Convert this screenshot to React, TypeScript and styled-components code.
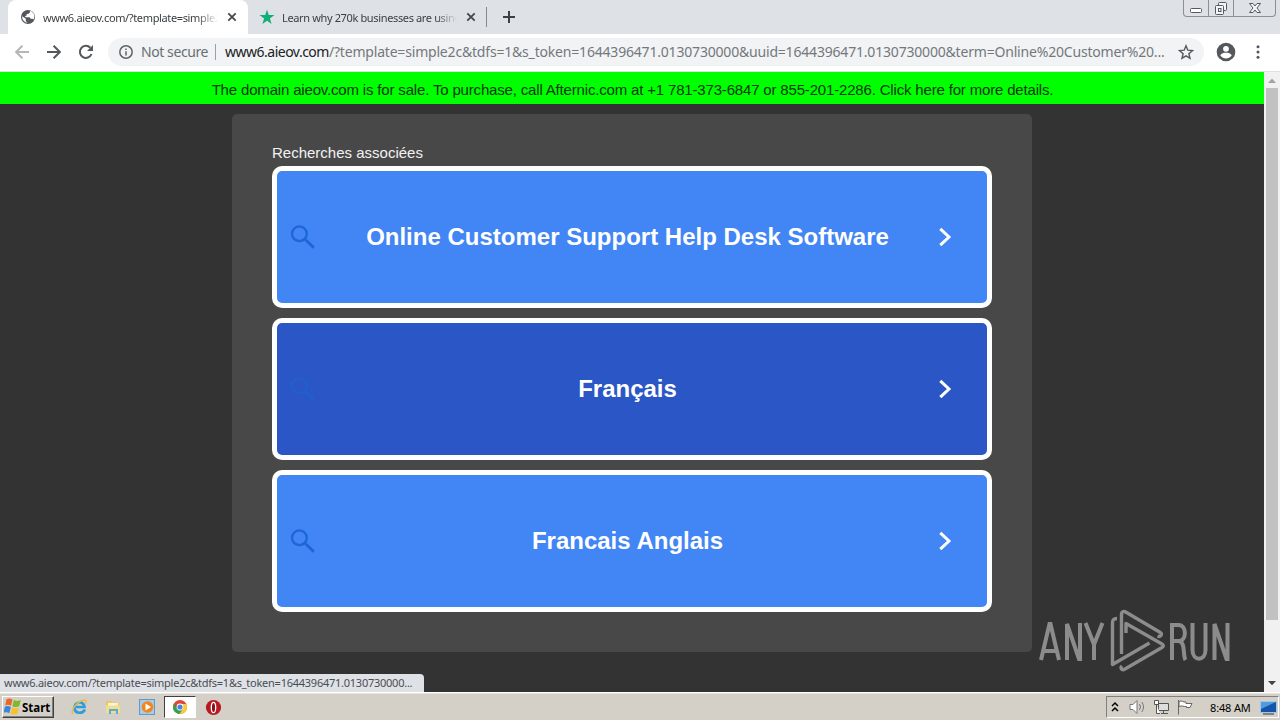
import React from "react";
import styled, { createGlobalStyle } from "styled-components";

const uiFont = `"Noto Sans", "Open Sans", "DejaVu Sans", sans-serif`;
const pageFont = `"Liberation Sans", Arial, sans-serif`;

const GlobalStyle = createGlobalStyle`
  * { box-sizing: border-box; }
  body { margin: 0; background: #333; overflow: hidden; }
  svg { display: block; flex: none; }
`;

const Desktop = styled.div`
  width: 1280px;
  height: 720px;
  display: flex;
  flex-direction: column;
  overflow: hidden;
  font-family: ${uiFont};
`;

const Label = styled.span<{ $size: number; $spacing?: number; $color?: string; $width?: number; $weight?: number }>`
  font-size: ${(p) => p.$size}px;
  letter-spacing: ${(p) => p.$spacing ?? 0}px;
  color: ${(p) => p.$color ?? "#3c4043"};
  font-weight: ${(p) => p.$weight ?? 400};
  width: ${(p) => (p.$width ? `${p.$width}px` : "auto")};
  flex: none;
  white-space: nowrap;
`;

const TabStrip = styled.header`
  height: 34px;
  flex: none;
  display: flex;
  background: #dee1e6;
  padding-left: 8px;
`;

const Tab = styled.div<{ $active?: boolean }>`
  width: 240px;
  height: 34px;
  display: flex;
  align-items: center;
  padding-left: ${(p) => (p.$active ? 12 : 11)}px;
  border-radius: 8px 8px 0 0;
  background: ${(p) => (p.$active ? "#fff" : "transparent")};
`;

const TabTitle = styled(Label)`
  margin-left: 7px;
  margin-right: 9px;
  overflow: hidden;
  mask-image: linear-gradient(to right, #000 88%, transparent);
`;

const TabDivider = styled.div`
  width: 1px;
  height: 20px;
  margin: 7px 15px 0 -2px;
  background: #85888d;
`;

const NewTab = styled.div`
  padding-top: 10px;
`;

const WindowControls = styled.div`
  height: 17px;
  margin-left: auto;
  margin-right: 4px;
  display: flex;
  border: 1px solid #8b8f96;
  border-top: 0;
  border-radius: 0 0 4px 4px;
`;

const WindowButton = styled.div<{ $width: number }>`
  width: ${(p) => p.$width}px;
  display: flex;
  justify-content: center;
  & + & { border-left: 1px solid #8b8f96; }
`;

const Toolbar = styled.div`
  height: 38px;
  flex: none;
  display: flex;
  align-items: center;
  padding: 0 12px 2px 14px;
  background: #fff;
  border-bottom: 1px solid #dce2dc;
`;

const NavIcons = styled.div`
  display: flex;
  gap: 16px;
  margin-right: 14px;
`;

const AddressBar = styled.div`
  width: 1096px;
  flex: none;
  height: 28px;
  display: flex;
  align-items: center;
  padding-left: 10px;
  border-radius: 14px;
  background: #f1f3f4;
`;

const SecurityLabel = styled(Label)`
  margin-left: 7px;
`;

const AddressDivider = styled.div`
  width: 1px;
  height: 16px;
  margin: 0 9px 0 7px;
  background: #9aa0a6;
`;

const Url = styled.div`
  width: 953px;
  display: flex;
  flex: none;
  line-height: 20px;
`;

const ToolbarEnd = styled.div`
  display: flex;
  align-items: center;
  gap: 12px;
  margin-left: 12px;
`;

const Viewport = styled.main`
  height: 620px;
  flex: none;
  display: flex;
  background: #333;
  position: relative;
`;

const Page = styled.div`
  width: 1264px;
  font-family: ${pageFont};
`;

const Banner = styled.div`
  height: 32px;
  display: flex;
  justify-content: center;
  align-items: center;
  padding: 2px 0 0 1px;
  background: #0f0;
`;

const Card = styled.section`
  width: 800px;
  height: 538px;
  margin: 10px auto 0;
  padding: 29px 40px 0;
  border-radius: 5px;
  background: #484848;
`;

const Heading = styled.div`
  height: 23px;
  line-height: 20px;
  display: flex;
`;

const Results = styled.div`
  display: flex;
  flex-direction: column;
  gap: 10px;
`;

const Result = styled.a<{ $hovered?: boolean }>`
  height: 142px;
  display: grid;
  grid-template-columns: 40px 1fr 49px;
  align-items: center;
  border: 5px solid #fff;
  border-radius: 10px;
  background: ${(p) => (p.$hovered ? "#2a56c6" : "#4285f4")};
  color: ${(p) => (p.$hovered ? "#225fcd" : "#1d66d6")};
`;

const ResultIcon = styled.span`
  padding-left: 13px;
`;

const ResultText = styled.span`
  text-align: center;
  font-size: 24px;
  line-height: 28px;
  font-weight: 700;
  color: #fff;
`;

const Scrollbar = styled.div`
  width: 16px;
  display: flex;
  flex-direction: column;
  align-items: center;
  background: #f1f1f1;
`;

const ScrollThumb = styled.div`
  width: 12px;
  height: 532px;
  margin-bottom: auto;
  background: #c1c1c1;
`;

const StatusBubble = styled.div`
  position: absolute;
  left: 0;
  bottom: 0;
  width: 424px;
  height: 18px;
  padding-left: 4px;
  line-height: 17px;
  display: flex;
  border-radius: 0 4px 0 0;
  background: #dee1e6;
`;

const Watermark = styled.div`
  position: absolute;
  left: 1036px;
  top: 536px;
  display: flex;
  opacity: 0.62;
`;

const Taskbar = styled.footer`
  height: 28px;
  flex: none;
  display: flex;
  align-items: center;
  padding: 1px 0 0 2px;
  background: #d4d0c8;
  border-top: 1px solid #fff;
  box-shadow: inset 0 1px #e8e5df;
`;

const StartButton = styled.button`
  width: 52px;
  height: 22px;
  display: flex;
  align-items: center;
  padding: 0 0 0 1px;
  border: 1px solid;
  border-color: #fff #404040 #404040 #fff;
  box-shadow: inset -1px -1px #808080;
  background: #d4d0c8;
  font-family: inherit;
`;

const Launchers = styled.div`
  display: flex;
  align-items: center;
  margin-left: 8px;
`;

const Launcher = styled.div<{ $active?: boolean }>`
  width: ${(p) => (p.$active ? 32 : 34)}px;
  height: 22px;
  display: flex;
  justify-content: center;
  align-items: center;
  border: ${(p) => (p.$active ? "1px solid" : "0")};
  border-color: #404040 #fff #fff #404040;
  background: ${(p) => (p.$active ? "#fff" : "transparent")};
`;

const Tray = styled.div`
  width: 173px;
  height: 22px;
  margin-left: auto;
  margin-right: 1px;
  display: flex;
  align-items: center;
  padding-left: 4px;
  border: 1px solid;
  border-color: #808080 #fff #fff #808080;
`;

const TrayIcon = styled.div<{ $gap: number }>`
  margin-right: ${(p) => p.$gap}px;
`;

const CloseIcon = () => (
  <svg width="10" height="10" viewBox="0 0 10 10" stroke="#45484b" strokeWidth="1.8">
    <path d="M1.3 1.3l7.4 7.4M8.7 1.3L1.3 8.7" />
  </svg>
);

const GlobeIcon = () => (
  <svg width="16" height="16" viewBox="0 0 16 16">
    <circle cx="8" cy="8" r="7" fill="#54585d" />
    <path d="M2.2 7.2l3.6 2.6v2.4l1.8 1.4c-2.9 0-5.8-2.7-5.4-6.4zM10 1.8v1.4L8.5 4.8 6.6 5v1.6L5 7.2l.6 1h4l1 1.6h1.8l1.2.8c2-4 .2-7.4-3.6-8.8z" fill="#fff" />
  </svg>
);

const StarTabIcon = () => (
  <svg width="16" height="16" viewBox="0 0 16 16">
    <path d="M8 .8l1.8 5.3h5.7l-4.6 3.4 1.7 5.5L8 11.7 3.4 15l1.7-5.5L.5 6.1h5.7z" fill="#12ae78" />
  </svg>
);

const BackIcon = () => (
  <svg width="16" height="16" viewBox="0 0 16 16" fill="none" stroke="#b4b6b8" strokeWidth="2">
    <path d="M15 8H2.5M8.4 1.7L2.1 8l6.3 6.3" />
  </svg>
);

const ForwardIcon = () => (
  <svg width="16" height="16" viewBox="0 0 16 16" fill="none" stroke="#55585c" strokeWidth="2">
    <path d="M1 8h12.5M7.6 1.7L13.9 8l-6.3 6.3" />
  </svg>
);

const ReloadIcon = () => (
  <svg width="16" height="16" viewBox="0 0 16 16">
    <path d="M13.5 10A6 6 0 1 1 12.3 3.8" fill="none" stroke="#55585c" strokeWidth="2" />
    <path d="M15 1v6H9z" fill="#55585c" />
  </svg>
);

const InfoIcon = () => (
  <svg width="16" height="16" viewBox="0 0 16 16" fill="none" stroke="#5f6368" strokeWidth="1.5">
    <circle cx="8" cy="8" r="6.2" />
    <path d="M8 7.2v4.2M8 4.4v1.7" />
  </svg>
);

const BookmarkIcon = () => (
  <svg width="16" height="16" viewBox="0 0 16 16" fill="none" stroke="#55585c" strokeWidth="1.4">
    <path d="M8 1.8l1.8 4.4 4.7.4-3.6 3.1 1.1 4.6L8 11.8l-4 2.5 1.1-4.6-3.6-3.1 4.7-.4z" />
  </svg>
);

const ProfileIcon = () => (
  <svg width="20" height="20" viewBox="0 0 20 20">
    <circle cx="10" cy="10" r="9.3" fill="#54585d" />
    <circle cx="10" cy="6.8" r="2.9" fill="#fff" />
    <path d="M4.3 13.5c1-2.2 3.5-2.7 5.7-2.7s4.7.5 5.7 2.7c-1.4 2-3.5 3-5.7 3s-4.3-1-5.7-3z" fill="#fff" />
  </svg>
);

const MenuIcon = () => (
  <svg width="20" height="20" viewBox="0 0 20 20" fill="#54585d">
    <circle cx="10" cy="4.8" r="1.5" />
    <circle cx="10" cy="10" r="1.5" />
    <circle cx="10" cy="15.2" r="1.5" />
  </svg>
);

const SearchIcon = () => (
  <svg width="25" height="26" viewBox="0 0 25 26" fill="none" stroke="currentColor">
    <circle cx="9.4" cy="9.7" r="7.4" strokeWidth="2.3" />
    <path d="M14.8 15l9 8.700" strokeWidth="2.900" />
  </svg>
);

const ChevronIcon = () => (
  <svg width="14" height="20" viewBox="0 0 14 20" fill="none" stroke="#fff" strokeWidth="3">
    <path d="M2.300 1.800l8.700 8.200-8.700 8.200" />
  </svg>
);

const ScrollArrow = ({ down }: { down?: boolean }) => (
  <svg width="16" height="16" viewBox="0 0 16 16">
    {down ? <path d="M4 5h8l-4 4.200z" fill="#444" /> : <path d="M4 11h8L8 6.500z" fill="#a3a3a3" />}
  </svg>
);

const BrandMark = () => (
  <svg width="198" height="68" viewBox="0 0 198 68" fill="none" stroke="#c3c3c3">
    <g strokeWidth="4">
      <path d="M5 52L13.500 16h1L23 52M8 43h12" />
      <path d="M31 52V16l12 35h1V15" />
      <path d="M49.500 15L58 36.500V52M66.500 15L58 36.500" />
      <path d="M136 52V17h6.500c8.500 0 8.500 16 0 16H136M142 33c8 0 4.500 14 7.500 19" />
      <path d="M156.500 15v27c0 11.500 13 11.500 13 0V15" />
      <path d="M178.500 52V16l12 35h1V15" />
    </g>
    <g strokeWidth="3.400" strokeLinejoin="round">
      <path d="M81 10.500c-3.500 0-4.500 1-4.500 4.500v41.500L113.500 35" />
      <path d="M85.500 46V7c0-4 2.500-4 5-2.500L123.500 24c3.500 2 1.500 5.500-2 4" />
      <path d="M90 25v-9.500L126 36c1.800 1 1.800 2.500 0 3.500L89 61c-3.500 2-5-1-3-3" />
    </g>
  </svg>
);

const WindowsIcon = () => (
  <svg width="18" height="18" viewBox="1 1 14.500 14.500">
    <path d="M3 2c2-1 3.300-.7 4.800.2L6.700 7.300C5.200 6.400 3.600 6.200 2 7z" fill="#ef6525" />
    <path d="M8.900 2.600c2 1 3.700 1 5.600.1l-1.300 5c-1.800.9-3.600.8-5.400-.1z" fill="#80b829" />
    <path d="M1.700 8c1.700-.8 3.200-.6 4.800.3l-1.200 5c-1.500-.9-3-1-4.800-.2z" fill="#3d86d6" />
    <path d="M7.600 8.700c1.800.9 3.500 1 5.300.2l-1.200 4.800c-1.900.9-3.700.8-5.400-.1z" fill="#f7c02c" />
  </svg>
);

const ExplorerIcon = () => (
  <svg width="18" height="18" viewBox="0 0 18 18" fill="none">
    <path d="M14.800 11.500c-1.300 4-9.600 5.100-10.400-1.500C4 3.500 14 2.200 14.500 9H6" stroke="#329bdc" strokeWidth="2.700" />
    <path d="M3 16C-.5 13.500 7 3 14 2c3-.5 2.500 2 1.500 3.500" stroke="#e4bd48" strokeWidth="1.400" />
  </svg>
);

const FolderIcon = () => (
  <svg width="18" height="18" viewBox="0 0 18 18">
    <path d="M2 3h5l1 1.500h7V15H2z" fill="#e7c768" />
    <path d="M4 5h10v4H4z" fill="#fff6cb" />
    <path d="M2 7.500h14V15H2z" fill="#f2dc8d" />
    <path d="M5 16v-5h9v5h-2v-3H7v3z" fill="#5cadd6" />
  </svg>
);

const MediaIcon = () => (
  <svg width="18" height="18" viewBox="0 0 18 18">
    <rect x="1.500" y="1.500" width="15" height="15" fill="#a8cbea" stroke="#5a9bd3" />
    <circle cx="9.500" cy="9" r="5.800" fill="#f08718" />
    <path d="M7.500 5.500L13 9l-5.500 3.500z" fill="#fff" />
  </svg>
);

const ChromeIcon = () => (
  <svg width="16" height="16" viewBox="0 0 16 16">
    <circle cx="8" cy="8" r="7" fill="#e14536" />
    <path d="M2 4.500A7 7 0 0 0 7.500 15L11 9.700 8 8H4z" fill="#31a350" />
    <path d="M7.500 15A7 7 0 0 0 14.300 5H8l3 4.700z" fill="#f8cd35" />
    <circle cx="8" cy="8" r="3.400" fill="#fff" />
    <circle cx="8" cy="8" r="2.600" fill="#4484e8" />
  </svg>
);

const OperaIcon = () => (
  <svg width="17" height="17" viewBox="0 0 17 17">
    <circle cx="8.500" cy="8.500" r="7.600" fill="#b81820" />
    <ellipse cx="8.500" cy="8.500" rx="2.200" ry="5.200" fill="#8c1118" stroke="#fff" strokeWidth="1.300" />
  </svg>
);

const results = [
  { text: "Online Customer Support Help Desk Software", hovered: false },
  { text: "Français", hovered: true },
  { text: "Francais Anglais", hovered: false },
];

export default function App() {
  return (
    <>
      <GlobalStyle />
      <Desktop>
        <TabStrip>
          <Tab $active>
            <GlobeIcon />
            <TabTitle $size={11} $width={175} $spacing={-0.36}>www6.aieov.com/?template=simple2c</TabTitle>
            <CloseIcon />
          </Tab>
          <Tab>
            <StarTabIcon />
            <TabTitle $size={11} $width={175} $spacing={-0.36}>Learn why 270k businesses are using</TabTitle>
            <CloseIcon />
          </Tab>
          <TabDivider />
          <NewTab>
            <svg width="14" height="14" viewBox="0 0 14 14" stroke="#3c4043" strokeWidth="2"><path d="M1 7h12M7 1v12" /></svg>
          </NewTab>
          <WindowControls>
            <WindowButton $width={24}>
              <svg width="14" height="16" viewBox="0 0 14 16" fill="#fff" stroke="#555a62"><rect x="1.500" y="8.500" width="11" height="4" rx="1" /></svg>
            </WindowButton>
            <WindowButton $width={25}>
              <svg width="14" height="16" viewBox="0 0 14 16" fill="#f4f5f7" stroke="#555a62"><rect x="4.500" y="2.500" width="8" height="8" rx="1" /><rect x="1.500" y="5.500" width="8" height="9" rx="1" /><rect x="4.500" y="8.500" width="2.500" height="3" /></svg>
            </WindowButton>
            <WindowButton $width={42}>
              <svg width="14" height="16" viewBox="0 0 14 16" fill="#f4f5f7" stroke="#555a62"><path d="M1.500 3.500H5l2 2.500 2-2.500h3.500L9 8l3.500 4.500H9L7 10l-2 2.500H1.500L5 8z" /></svg>
            </WindowButton>
          </WindowControls>
        </TabStrip>
        <Toolbar>
          <NavIcons><BackIcon /><ForwardIcon /><ReloadIcon /></NavIcons>
          <AddressBar>
            <InfoIcon />
            <SecurityLabel $size={14} $width={67} $spacing={-0.42} $color="#6a6e73">Not secure</SecurityLabel>
            <AddressDivider />
            <Url>
              <Label $size={14} $spacing={-0.5} $color="#202124">www6.aieov.com</Label>
              <Label $size={14} $spacing={-0.19} $color="#74787d">/?template=simple2c&amp;tdfs=1&amp;s_token=1644396471.0130730000&amp;uuid=1644396471.0130730000&amp;term=Online%20Customer%20...</Label>
            </Url>
            <BookmarkIcon />
          </AddressBar>
          <ToolbarEnd><ProfileIcon /><MenuIcon /></ToolbarEnd>
        </Toolbar>
        <Viewport>
          <Page>
            <Banner>
              <Label $size={15} $spacing={-0.17} $color="#0b350b">The domain aieov.com is for sale. To purchase, call Afternic.com at +1 781-373-6847 or 855-201-2286. Click here for more details.</Label>
            </Banner>
            <Card>
              <Heading><Label $size={15} $color="#f2f2f2">Recherches associées</Label></Heading>
              <Results>
                {results.map(({ text, hovered }) => (
                  <Result key={text} $hovered={hovered}>
                    <ResultIcon><SearchIcon /></ResultIcon>
                    <ResultText>{text}</ResultText>
                    <ChevronIcon />
                  </Result>
                ))}
              </Results>
            </Card>
          </Page>
          <Scrollbar><ScrollArrow /><ScrollThumb /><ScrollArrow down /></Scrollbar>
          <StatusBubble>
            <Label $size={11} $spacing={-0.25} $color="#4a4d51">www6.aieov.com/?template=simple2c&amp;tdfs=1&amp;s_token=1644396471.0130730000...</Label>
          </StatusBubble>
          <Watermark><BrandMark /></Watermark>
        </Viewport>
        <Taskbar>
          <StartButton><WindowsIcon /><Label $size={11.5} $weight={700} $color="#000">Start</Label></StartButton>
          <Launchers>
            <Launcher><ExplorerIcon /></Launcher>
            <Launcher><FolderIcon /></Launcher>
            <Launcher><MediaIcon /></Launcher>
            <Launcher $active><ChromeIcon /></Launcher>
            <Launcher><OperaIcon /></Launcher>
          </Launchers>
          <Tray>
            <TrayIcon $gap={10}>
              <svg width="8" height="12" viewBox="0 0 8 12" fill="none" stroke="#000" strokeWidth="1.500"><path d="M1 5l3-3 3 3M1 10l3-3 3 3" /></svg>
            </TrayIcon>
            <TrayIcon $gap={7}>
              <svg width="17" height="16" viewBox="0 0 17 16" fill="#fff" stroke="#777"><path d="M1 5.500h3l4-4v13l-4-4H1z" /><path d="M10.500 5q2 3 0 6M12.800 3q3.500 5 0 10" fill="none" /></svg>
            </TrayIcon>
            <TrayIcon $gap={8}>
              <svg width="16" height="16" viewBox="0 0 16 16" fill="#ddd" stroke="#555"><path d="M5.500 4.500h10v7h-10zM8 14.500h7M10.500 12v2.500" /><path d="M1.500 1.500h4v4h-4zM3.500 5.500v9H7" fill="#fff" /></svg>
            </TrayIcon>
            <TrayIcon $gap={16}>
              <svg width="17" height="16" viewBox="0 0 17 16" fill="#fff" stroke="#666"><path d="M1.500 1v14.500M2 2.500c3-1.500 4 1 7 .5v1.500h6l-2 4H9.500v-1c-3 .5-4-1.500-7.500 0z" /></svg>
            </TrayIcon>
            <Label $size={11} $spacing={-0.15} $width={50} $color="#000">8:48 AM</Label>
            <svg width="17" height="16" viewBox="0 0 17 16"><rect x=".5" y="2.500" width="16" height="11" fill="#1554a8" stroke="#9fc6e5" /><path d="M1 3h15L1 10z" fill="#4f9be0" /><path d="M3 15h11" stroke="#333" /></svg>
          </Tray>
        </Taskbar>
      </Desktop>
    </>
  );
}
